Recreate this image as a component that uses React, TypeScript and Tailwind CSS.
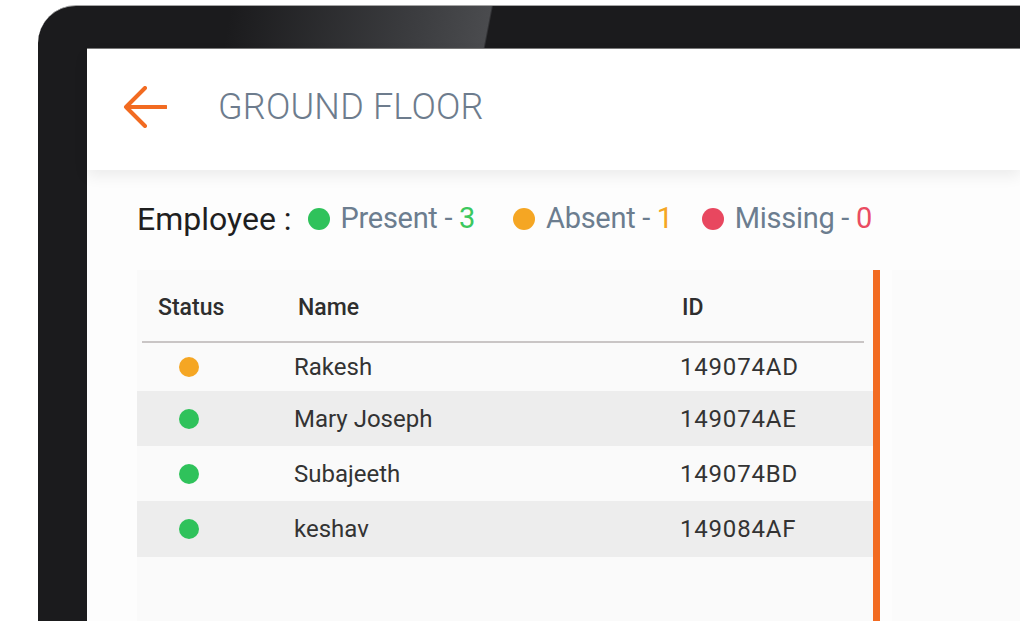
import React from 'react';

type Status = 'present' | 'absent' | 'missing';

const dotColor: Record<Status, string> = {
  present: 'bg-[#2fc25b]',
  absent: 'bg-[#f5a623]',
  missing: 'bg-[#e8475f]',
};

const employees: { status: Status; name: string; id: string; h: string }[] = [
  { status: 'absent', name: 'Rakesh', id: '149074AD', h: 'h-[48px]' },
  { status: 'present', name: 'Mary Joseph', id: '149074AE', h: 'h-[55px]' },
  { status: 'present', name: 'Subajeeth', id: '149074BD', h: 'h-[55px]' },
  { status: 'present', name: 'keshav', id: '149084AF', h: 'h-[56px]' },
];

function BackArrow() {
  return (
    <svg width="44" height="42" viewBox="0 0 44 42" fill="none">
      <path
        d="M43 21H3M22 2L3 21L22 40"
        stroke="#f26b21"
        strokeWidth="4"
        strokeLinecap="round"
        strokeLinejoin="round"
      />
    </svg>
  );
}

function Legend({ status, label, count, countColor, className = '' }: { status: Status; label: string; count: number; countColor: string; className?: string }) {
  return (
    <div className={`flex items-center ${className}`}>
      <span className={`h-[22px] w-[22px] rounded-full ${dotColor[status]}`} />
      <span className="ml-[11px] text-[29px] tracking-[-0.3px] text-[#6c7d8f]">
        {label} - <span className={countColor}>{count}</span>
      </span>
    </div>
  );
}

export default function App() {
  return (
    <div className="flex h-[621px] w-[1020px] flex-col overflow-hidden bg-white pl-[38px] pt-[5px] font-['Roboto',sans-serif]">
      {/* tablet bezel */}
      <div className="flex flex-1 flex-col rounded-tl-[38px] border-t border-[#a5a5a5] bg-[linear-gradient(101deg,#1b1b1d_190px,#3d3e41_380px,#4a4b4e_445px,#1b1b1d_447px)] pl-[49px] pt-[42px]">
        <div className="flex flex-1 flex-col border-t border-[#7a7a7a] bg-[#fdfdfd]">
          {/* header */}
          <div className="relative z-10 flex h-[121px] items-center bg-white pl-[36px] pb-[6px] shadow-[0_6px_14px_rgba(0,0,0,0.07)]">
            <BackArrow />
            <h1 className="ml-[51px] text-[36px] font-light tracking-[0.2px] text-[#6d7c8d]">GROUND FLOOR</h1>
          </div>

          {/* content */}
          <div className="flex flex-1 flex-col pl-[50px] pt-[25px]">
            <div className="flex items-center">
              <span className="text-[32px] text-[#1f1f1f]">Employee :</span>
              <Legend className="ml-[16px]" status="present" label="Present" count={3} countColor="text-[#3cc85e]" />
              <Legend className="ml-[38px]" status="absent" label="Absent" count={1} countColor="text-[#f5a623]" />
              <Legend className="ml-[29px]" status="missing" label="Missing" count={0} countColor="text-[#ea4c62]" />
            </div>

            <div className="mt-[27px] flex flex-1">
              <div className="w-[736px] bg-[#fafafa]">
                <div className="flex h-[71px] items-center pl-[21px] pt-[5px] text-[23px] font-medium text-[#2e2e2e]">
                  <span className="w-[140px]">Status</span>
                  <span className="w-[384px]">Name</span>
                  <span>ID</span>
                </div>
                <div className="ml-[5px] mr-[9px] h-[2px] bg-[#c9c5c5]" />
                {employees.map((e, i) => (
                  <div
                    key={e.id}
                    className={`flex items-center pl-[42px] text-[24px] text-[#333] ${e.h} ${i % 2 === 1 ? 'bg-[#ededed]' : 'bg-[#fafafa]'}`}
                  >
                    <span className="w-[115px]">
                      <span className={`block h-[20px] w-[20px] rounded-full ${dotColor[e.status]}`} />
                    </span>
                    <span className="w-[386px]">{e.name}</span>
                    <span className="tracking-[0.8px]">{e.id}</span>
                  </div>
                ))}
              </div>
              <div className="w-[7px] bg-[#f26b21]" />
              <div className="ml-[12px] flex-1 bg-[#fbfbfb]" />
            </div>
          </div>
        </div>
      </div>
    </div>
  );
}
